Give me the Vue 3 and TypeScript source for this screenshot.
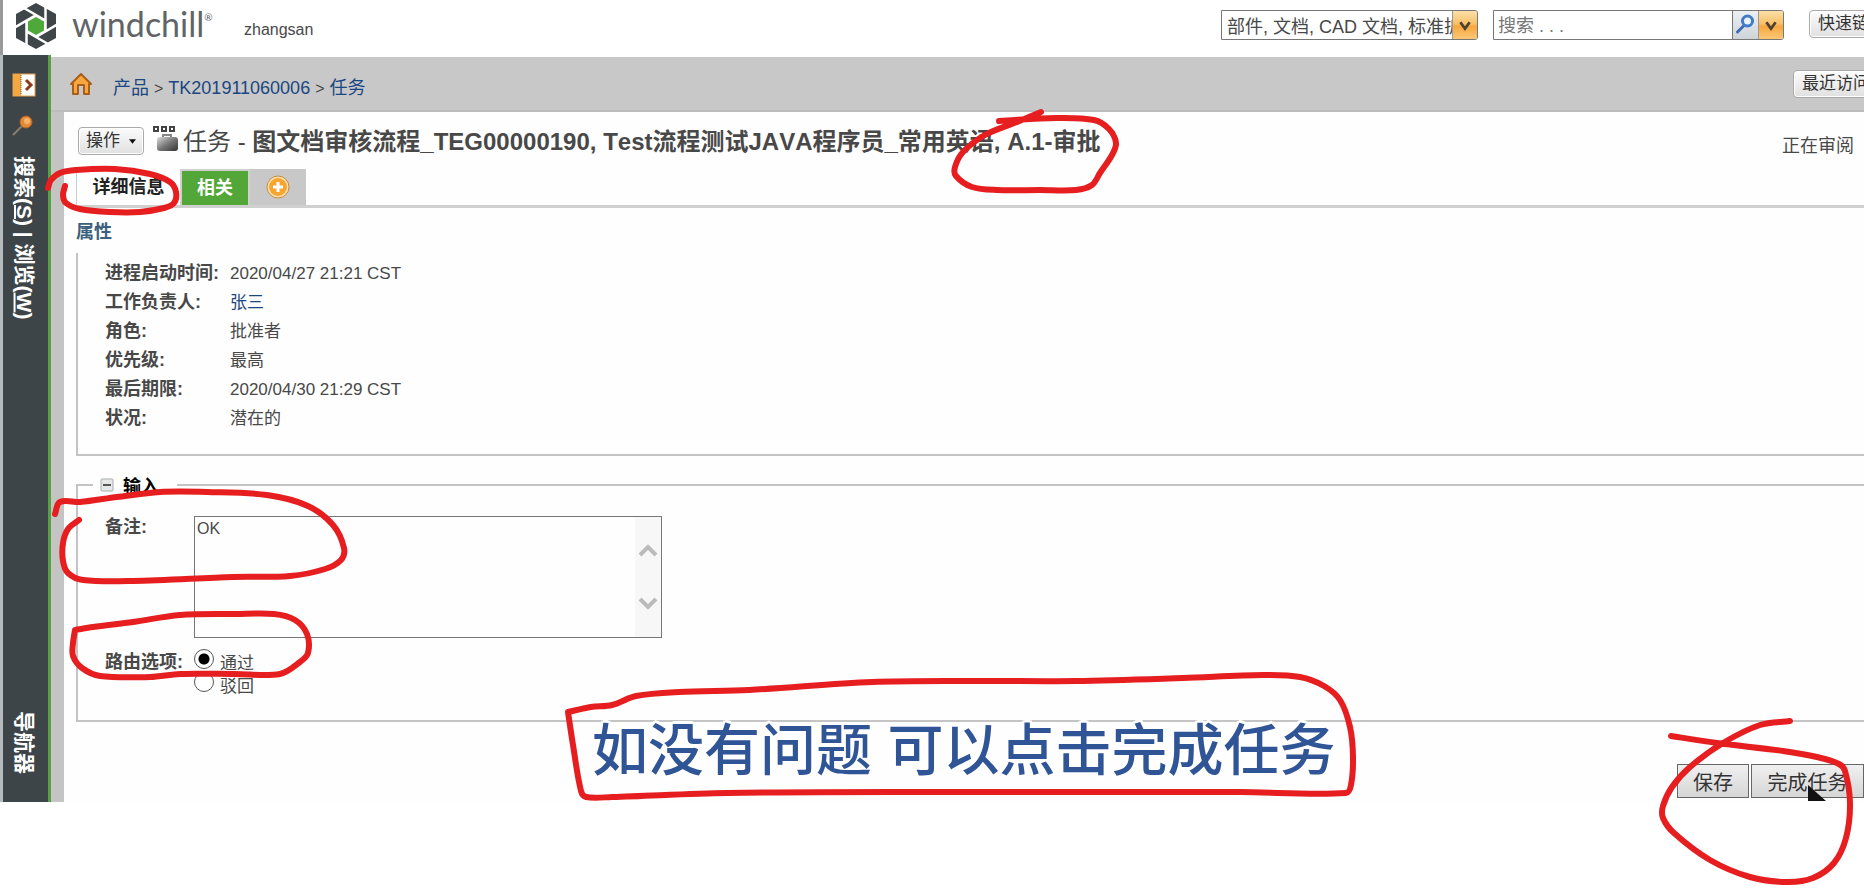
<script setup lang="ts">
import { ref } from 'vue'

type Point = [number, number]

interface Property {
  label: string
  value: string
  href?: string
}

const properties: Property[] = [
  { label: '进程启动时间:', value: '2020/04/27 21:21 CST' },
  { label: '工作负责人:', value: '张三', href: '#owner' },
  { label: '角色:', value: '批准者' },
  { label: '优先级:', value: '最高' },
  { label: '最后期限:', value: '2020/04/30 21:29 CST' },
  { label: '状况:', value: '潜在的' },
]

const routes: string[] = ['通过', '驳回']
const route = ref('通过')
const comment = ref('OK')
const keyword = ref('')

// Hand-drawn marker strokes, each a list of points along the line.
const strokes: Point[][] = [
  [[48, 188], [51, 180], [60, 173], [76, 170], [115, 169], [150, 174], [170, 182], [176, 192], [174, 203], [164, 208], [140, 212], [110, 212], [80, 209], [66, 203], [63, 195], [65, 186]],
  [[1041, 112], [1017, 122], [985, 135], [963, 152], [955, 167], [956, 176], [972, 187], [997, 190], [1040, 190], [1076, 190], [1092, 185], [1100, 173], [1112, 155], [1116, 143], [1109, 129], [1094, 120], [1056, 118], [999, 121]],
  [[55, 514], [60, 502], [80, 502], [117, 497], [160, 492], [207, 492], [267, 495], [308, 506], [333, 525], [344, 548], [341, 560], [325, 569], [290, 576], [233, 577], [133, 581], [83, 580], [68, 573], [63, 561], [63, 543], [68, 529], [79, 520]],
  [[75, 630], [93, 627], [133, 622], [180, 615], [235, 614], [274, 614], [295, 620], [307, 634], [308, 653], [300, 662], [280, 674], [235, 674], [180, 674], [150, 677], [100, 676], [82, 668], [73, 656], [73, 643], [75, 630]],
  [[568, 712], [591, 707], [612, 705], [636, 696], [679, 692], [749, 690], [872, 682], [979, 681], [1076, 681], [1183, 678], [1263, 675], [1300, 677], [1324, 686], [1340, 700], [1350, 727], [1353, 757], [1351, 785], [1346, 793], [1240, 792], [1129, 792], [942, 792], [727, 793], [612, 797], [586, 797], [581, 791], [573, 745], [568, 712]],
  [[1671, 736], [1717, 743], [1783, 751], [1817, 757], [1839, 764], [1845, 771], [1850, 803], [1846, 838], [1834, 863], [1813, 878], [1787, 882], [1750, 877], [1710, 860], [1674, 833], [1663, 818], [1663, 806], [1672, 787], [1690, 767], [1723, 743], [1760, 725], [1790, 721]],
]

// Smooth curve through all points.
function toPath(points: Point[]): string {
  const parts = [`M${points[0][0]} ${points[0][1]}`]
  for (let i = 0; i < points.length - 1; i++) {
    const before = points[Math.max(i - 1, 0)]
    const from = points[i]
    const to = points[i + 1]
    const after = points[Math.min(i + 2, points.length - 1)]
    const length = Math.hypot(to[0] - from[0], to[1] - from[1])
    const handle = (a: Point, b: Point): Point => {
      const span = Math.hypot(b[0] - a[0], b[1] - a[1]) || 1
      return [((b[0] - a[0]) / span) * length * 0.33, ((b[1] - a[1]) / span) * length * 0.33]
    }
    const h1 = handle(before, to)
    const h2 = handle(from, after)
    parts.push(
      `C${from[0] + h1[0]} ${from[1] + h1[1]} ${to[0] - h2[0]} ${to[1] - h2[1]} ${to[0]} ${to[1]}`,
    )
  }
  return parts.join('')
}
</script>

<template>
  <div class="page">
    <header class="top">
      <svg class="logo" viewBox="0 0 40 46" aria-hidden="true">
        <path d="M20 0 40 11V35L20 46 0 35V11z" fill="#3f464a" />
        <path d="M20 12 29.5 17.5V28.5L20 34 10.5 28.5V17.5z" fill="#fff" />
        <path d="M29.5 28.5V0M29.5 17.5 1 1M20 12-9 29M10.5 17.5V46M10.5 28.5 39 45M20 34 49 17" stroke="#fff" stroke-width="2.5" />
        <path d="M20 14 28 18.5V27.5L20 32 12 27.5V18.5z" fill="#4fa83a" />
      </svg>
      <span class="brand">windchill<sup>®</sup></span>
      <span class="user">zhangsan</span>
      <div class="tools">
        <div class="combo scope">
          <select aria-label="搜索类型">
            <option>部件, 文档, CAD 文档, 标准扩展</option>
          </select>
          <svg class="arrow" viewBox="0 0 26 28" aria-hidden="true"><path d="M8 11 13 18 18 11" /></svg>
        </div>
        <div class="combo search">
          <input v-model="keyword" type="text" aria-label="搜索" placeholder="搜索 . . ." />
          <button class="find" type="button" aria-label="开始搜索">
            <svg viewBox="0 0 24 28" aria-hidden="true">
              <path d="M4 21 10 15" stroke="#3f6db5" stroke-width="3" stroke-linecap="round" />
              <circle cx="14" cy="10" r="5" fill="#e8f2fb" stroke="#3f7bc8" stroke-width="3" />
            </svg>
          </button>
          <button class="more" type="button" aria-label="搜索选项">
            <svg class="arrow" viewBox="0 0 26 28" aria-hidden="true"><path d="M8 11 13 18 18 11" /></svg>
          </button>
        </div>
        <div class="cut quick"><button class="soft" type="button">快速链接</button></div>
      </div>
    </header>

    <div class="body">
      <aside class="rail">
        <button class="rail-icon" type="button" aria-label="展开导航器">
          <svg viewBox="0 0 24 24" width="24" height="24" aria-hidden="true">
            <rect x="1" y="1" width="22" height="22" fill="#fff" stroke="#e2a04e" />
            <rect x="1" y="1" width="8" height="22" fill="#f5a742" />
            <path d="M9 2V22" stroke="#8a5a20" stroke-dasharray="1 1" />
            <path d="M14 7 19 12 14 17" fill="none" stroke="#8d3b1a" stroke-width="3" />
          </svg>
        </button>
        <svg class="rail-find" viewBox="0 0 24 24" width="24" height="24" aria-hidden="true">
          <path d="M1 22 10 13" stroke="#8b7d70" stroke-width="2" />
          <circle cx="14" cy="9" r="6" fill="#e58a35" stroke="#b5652a" />
          <circle cx="15" cy="8" r="3" fill="#f7b56c" />
        </svg>
        <div class="rail-text">搜索(<u>S</u>) | 浏览(<u>W</u>)</div>
        <div class="rail-text bottom">导航器</div>
      </aside>

      <main class="main">
        <nav class="crumbs" aria-label="位置">
          <svg viewBox="0 0 22 24" width="22" height="24" aria-hidden="true">
            <path d="M1 12 11 2 21 12H19V22H14V13H8V22H3V12z" fill="#f9a63f" stroke="#a85f1c" stroke-width="2" stroke-linejoin="round" />
          </svg>
          <div class="trail">
            <a href="#product">产品</a><i>&gt;</i><a href="#tk">TK201911060006</a><i>&gt;</i><a href="#task">任务</a>
          </div>
          <div class="cut recent"><button class="soft" type="button">最近访问</button></div>
        </nav>

        <div class="panel">
          <div class="title">
            <button class="soft actions" type="button">操作<svg viewBox="0 0 8 6" width="8" height="6" aria-hidden="true"><path d="M0 1H8L4 6z" fill="#111" /></svg></button>
            <svg class="task-icon" viewBox="0 0 26 26" width="26" height="26" aria-hidden="true">
              <defs>
                <linearGradient id="case" x1="0" y1="0" x2="1" y2="1">
                  <stop offset="0" stop-color="#ddd" /><stop offset=".5" stop-color="#777" /><stop offset="1" stop-color="#333" />
                </linearGradient>
              </defs>
              <g fill="#fff" stroke="#444" stroke-width="2">
                <rect x="1" y="1" width="4" height="4" /><rect x="9" y="1" width="4" height="4" /><rect x="17" y="1" width="4" height="4" />
              </g>
              <path d="M10 12V9H18V12" fill="none" stroke="#888" stroke-width="2" />
              <rect x="4" y="11" width="21" height="14" rx="3" fill="url(#case)" />
            </svg>
            <h1><span>任务 - </span>图文档审核流程_TEG00000190, Test流程测试JAVA程序员_常用英语, A.1-审批</h1>
            <span class="state">正在审阅</span>
          </div>

          <div class="tabs" role="tablist">
            <button class="tab current" type="button" role="tab" aria-selected="true">详细信息</button>
            <button class="tab related" type="button" role="tab" aria-selected="false">相关</button>
            <button class="tab add" type="button" aria-label="新建选项卡">
              <svg viewBox="0 0 24 24" width="24" height="24" aria-hidden="true">
                <circle cx="12" cy="12" r="10" fill="#f6a531" stroke="#fbe0b4" stroke-width="2" />
                <circle cx="12" cy="12" r="11" fill="none" stroke="#c98a3c" />
                <path d="M12 7V17M7 12H17" stroke="#fff" stroke-width="3" />
              </svg>
            </button>
          </div>

          <h2>属性</h2>
          <dl class="box">
            <div v-for="item in properties" :key="item.label" class="row">
              <dt>{{ item.label }}</dt>
              <dd><a v-if="item.href" :href="item.href">{{ item.value }}</a><template v-else>{{ item.value }}</template></dd>
            </div>
          </dl>

          <section class="box form">
            <div class="legend">
              <button type="button" aria-label="折叠">
                <svg viewBox="0 0 14 14" width="14" height="14" aria-hidden="true">
                  <rect x="1" y="1" width="12" height="12" rx="1" fill="#e6e8e8" stroke="#a8adad" />
                  <path d="M3 7H11" stroke="#555" stroke-width="2" />
                </svg>
              </button>
              <h3>输入</h3>
            </div>
            <div class="field">
              <label class="name" for="comment">备注:</label>
              <div class="note">
                <textarea id="comment" v-model="comment"></textarea>
                <div class="scroll" aria-hidden="true">
                  <svg viewBox="0 0 20 14" width="20" height="14"><path d="M2 12 10 4 18 12" /></svg>
                  <svg viewBox="0 0 20 14" width="20" height="14"><path d="M2 2 10 10 18 2" /></svg>
                </div>
              </div>
            </div>
            <div class="field" role="radiogroup" aria-labelledby="route-name">
              <span id="route-name" class="name route-name">路由选项:</span>
              <div class="routes">
                <label v-for="item in routes" :key="item">
                  <input v-model="route" type="radio" name="route" :value="item" /><span>{{ item }}</span>
                </label>
              </div>
            </div>
          </section>

          <div class="buttons">
            <button type="button">保存</button>
            <button class="finish" type="button">完成任务</button>
          </div>
        </div>
      </main>
    </div>

    <p class="caption">如没有问题 可以点击完成任务</p>

    <svg class="marks" width="1864" height="888" aria-hidden="true">
      <path d="M1808 785V801H1826z" fill="#111" />
      <path v-for="(points, index) in strokes" :key="index" class="stroke" :d="toPath(points)" />
    </svg>
  </div>
</template>

<style>
body {
  margin: 0;
  background: #fff;
}
</style>

<style scoped>
.page {
  position: relative;
  min-height: 100vh;
  overflow: hidden;
  background: #fff;
  color: #484848;
  font-family: "Liberation Sans", "Noto Sans CJK SC", sans-serif;
  font-size: 17px;
}
.page * {
  box-sizing: border-box;
}
button,
input,
select,
textarea {
  margin: 0;
  padding: 0;
  border: 0;
  border-radius: 0;
  background: none;
  color: inherit;
  font: inherit;
}
svg {
  display: block;
}
a {
  color: #1a4682;
  text-decoration: none;
}
h1,
h2,
h3,
p,
dl,
dd {
  margin: 0;
}

.top {
  display: flex;
  align-items: center;
  height: 55px;
  padding-left: 13px;
  border-left: 3px solid #999;
}
.logo {
  width: 40px;
  height: 46px;
  margin-bottom: 4px;
}
.brand {
  width: 172px;
  margin: 0 0 8px 16px;
  color: #606467;
  font-family: Lato, sans-serif;
  font-size: 34px;
  line-height: 40px;
}
.brand sup {
  font-size: 10px;
  line-height: 1;
  vertical-align: 16px;
}
.user {
  padding-top: 4px;
  font-size: 16px;
}
.tools {
  display: flex;
  align-items: flex-start;
  height: 55px;
  margin-left: auto;
  padding-top: 10px;
}
.combo {
  display: flex;
  height: 30px;
  border: 1px solid #777;
  border-radius: 0 3px 3px 0;
  overflow: hidden;
  font-size: 18px;
}
.scope {
  width: 257px;
  margin-right: 15px;
}
.scope select {
  flex: 1;
  min-width: 0;
  padding: 3px 0 0 5px;
  appearance: none;
  white-space: nowrap;
  overflow: hidden;
}
.search {
  width: 291px;
  margin-right: 25px;
}
.search input {
  flex: 1;
  min-width: 0;
  padding: 3px 0 0 4px;
}
.search input::placeholder {
  color: #777;
  opacity: 1;
}
.arrow,
.find svg {
  width: 25px;
  height: 28px;
}
.arrow {
  flex: none;
  border-left: 1px solid #999;
  background: linear-gradient(#fbe0a8, #fac06a 45%, #f8a73e 55%, #fbc877);
}
.arrow path {
  fill: none;
  stroke: #4a4034;
  stroke-width: 3;
}
.find {
  border-left: 1px solid #777;
  background: linear-gradient(#eceff2, #cfd4d9);
}
.find path {
  fill: none;
}
.cut {
  flex: none;
  overflow: hidden;
}
.quick {
  width: 55px;
  height: 28px;
}
.soft {
  height: 28px;
  padding: 0 8px;
  border: 1px solid #aaa;
  border-radius: 4px;
  background: linear-gradient(#fcfcfc, #e0e0e0);
  box-shadow: inset 0 0 0 1px #fff;
  color: #333;
  line-height: 24px;
  white-space: nowrap;
}

.body {
  display: flex;
}
.rail {
  display: flex;
  flex: none;
  flex-direction: column;
  align-items: center;
  width: 51px;
  padding: 18px 3px 28px 0;
  border-right: 3px solid #57a046;
  border-left: 3px solid #b4babd;
  background: #3e4548;
  color: #fff;
}
.rail-icon {
  margin-bottom: 16px;
}
.rail-find {
  flex: none;
  margin-bottom: 19px;
}
.rail-text {
  font-size: 21px;
  font-weight: bold;
  line-height: 24px;
  writing-mode: vertical-rl;
  text-orientation: sideways;
  white-space: nowrap;
}
.rail-text u {
  text-decoration-thickness: 2px;
}
.bottom {
  margin-top: auto;
}
.main {
  display: flex;
  flex: 1;
  flex-direction: column;
  min-width: 0;
  padding-top: 2px;
}
.crumbs {
  display: flex;
  align-items: center;
  height: 55px;
  padding-left: 19px;
  border-bottom: 2px solid #bcbcbc;
  background: #c8c8c8;
  font-size: 18px;
}
.trail {
  display: flex;
  align-items: baseline;
  margin-left: 21px;
  padding-top: 5px;
}
.trail i {
  padding: 0 5px;
  font-size: 16px;
  font-style: normal;
}
.crumbs .recent {
  width: 71px;
  margin-left: auto;
  font-size: 17px;
}
.panel {
  padding-left: 12px;
  border-left: 13px solid #c4c4c2;
  border-image: linear-gradient(to right, #c4c4c2 70%, #999) 1;
  border-width: 0 0 0 13px;
  border-style: solid;
  background: #fefefe;
}
.title {
  display: flex;
  align-items: center;
  height: 57px;
}
.actions {
  display: flex;
  flex: none;
  align-items: center;
  gap: 9px;
  width: 66px;
  margin-left: 2px;
  padding: 0 7px;
  font-size: 17px;
}
.task-icon {
  flex: none;
  margin: 0 4px 4px 9px;
}
h1 {
  padding-top: 2px;
  font-kerning: none;
  font-size: 24px;
  line-height: 36px;
  white-space: nowrap;
}
h1 span {
  font-weight: normal;
  white-space: pre;
}
.state {
  margin-left: auto;
  padding: 6px 10px 0 0;
  font-size: 18px;
}
.tabs {
  display: flex;
  height: 39px;
  border-bottom: 3px solid #d0d0d0;
}
.tab {
  height: 36px;
  font-size: 18px;
  font-weight: bold;
  line-height: 34px;
}
.current {
  width: 104px;
  border-left: 1px solid #ccc;
  color: #222;
}
.related {
  width: 70px;
  border: 2px solid #d0d0d0;
  border-bottom: 0;
  background: #53a638;
  color: #fff;
}
.add {
  display: grid;
  width: 56px;
  place-items: center;
  background: #c8c8c8;
}
h2 {
  height: 45px;
  color: #3b5f7c;
  font-size: 18px;
  line-height: 48px;
}
.box {
  border: solid #c4c4c4;
  border-width: 0 0 2px 2px;
}
dl.box {
  padding: 6px 0 21px 27px;
}
.row {
  display: flex;
  height: 29px;
  line-height: 29px;
}
dt,
.name {
  flex: none;
  font-size: 18px;
  font-weight: bold;
}
dt {
  width: 125px;
}
.form {
  margin-top: 28px;
  padding: 0 0 27px 27px;
  border-top-width: 2px;
}
.legend {
  display: flex;
  align-items: center;
  width: 84px;
  height: 26px;
  margin: -14px 0 18px -12px;
  padding-left: 7px;
  gap: 9px;
  background: #fefefe;
}
h3 {
  color: #000;
  font-size: 18px;
}
.field {
  display: flex;
  align-items: flex-start;
}
.name {
  width: 89px;
  line-height: 22px;
}
.note {
  display: flex;
  width: 468px;
  height: 122px;
  margin-bottom: 9px;
  border: 1px solid #777;
}
.note textarea {
  flex: 1;
  min-width: 0;
  padding: 2px;
  font-size: 16px;
  line-height: 20px;
  overflow: hidden;
  resize: none;
}
.scroll {
  display: flex;
  flex-direction: column;
  align-items: center;
  justify-content: space-between;
  width: 26px;
  padding: 26px 0;
  background: #f7f7f7;
}
.scroll path {
  fill: none;
  stroke: #bbb;
  stroke-width: 4;
}
.route-name {
  padding-top: 4px;
}
.routes label {
  display: flex;
  align-items: center;
  gap: 6px;
  height: 23px;
}
.routes input {
  flex: none;
  width: 20px;
  height: 20px;
  border: 1px solid #555;
  border-radius: 50%;
  background: #fff;
  appearance: none;
}
.routes input:checked {
  background: radial-gradient(circle, #000 5px, #fff 6px);
}
.routes span {
  padding-top: 6px;
}
.buttons {
  display: flex;
  justify-content: flex-end;
  gap: 2px;
  padding: 42px 0 4px;
}
.buttons button {
  width: 72px;
  height: 34px;
  border: 1px solid #666;
  background: linear-gradient(#f0f0f0, #d6d6d6);
  color: #333;
  font-size: 20px;
}
.buttons .finish {
  width: 113px;
}
.caption {
  position: absolute;
  top: 711px;
  left: 592px;
  color: #2f5597;
  font-size: 56px;
  font-weight: 500;
  line-height: 80px;
  text-shadow: 3px 0 #fff, -3px 0 #fff, 0 3px #fff, 0 -3px #fff, 2px 2px #fff, -2px -2px #fff, 2px -2px #fff, -2px 2px #fff;
  white-space: nowrap;
}
.marks {
  position: absolute;
  top: 0;
  left: 0;
  pointer-events: none;
}
.stroke {
  fill: none;
  stroke: #e61e20;
  stroke-width: 6;
  stroke-linecap: round;
  stroke-linejoin: round;
}
</style>
